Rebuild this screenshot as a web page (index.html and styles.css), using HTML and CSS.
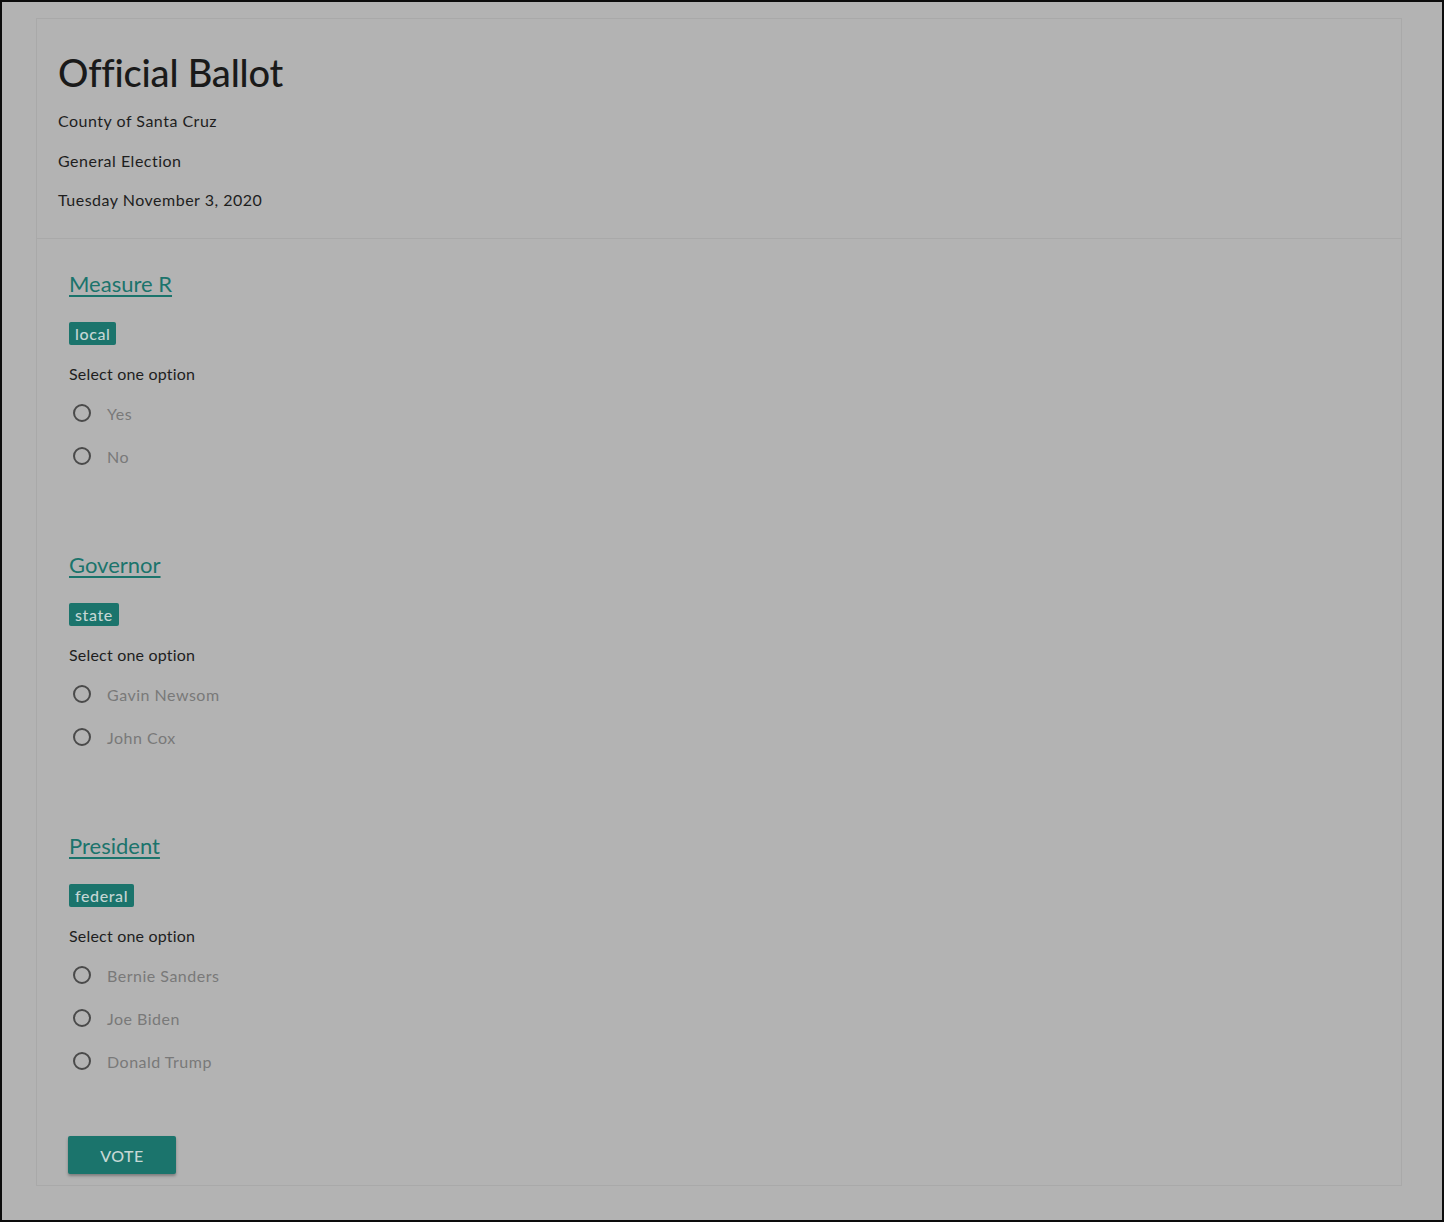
FILE: index.html
```html
<!DOCTYPE html>
<html>
<head>
<meta charset="utf-8">
<link rel="stylesheet" href="styles.css">
</head>
<body>
<div class="frame">
  <div class="card">
    <header class="head">
      <h1 class="title">Official Ballot</h1>
      <p class="meta">County of Santa Cruz</p>
      <p class="meta">General Election</p>
      <p class="meta">Tuesday November 3, 2020</p>
    </header>
    <main class="body">
      <section class="race">
        <a class="race-title">Measure R</a>
        <span class="tag">local</span>
        <p class="hint">Select one option</p>
        <label class="opt"><span class="radio"></span>Yes</label>
        <label class="opt"><span class="radio"></span>No</label>
      </section>
      <section class="race">
        <a class="race-title">Governor</a>
        <span class="tag">state</span>
        <p class="hint">Select one option</p>
        <label class="opt"><span class="radio"></span>Gavin Newsom</label>
        <label class="opt"><span class="radio"></span>John Cox</label>
      </section>
      <section class="race">
        <a class="race-title">President</a>
        <span class="tag">federal</span>
        <p class="hint">Select one option</p>
        <label class="opt"><span class="radio"></span>Bernie Sanders</label>
        <label class="opt"><span class="radio"></span>Joe Biden</label>
        <label class="opt"><span class="radio"></span>Donald Trump</label>
      </section>
      <button class="vote">VOTE</button>
    </main>
  </div>
</div>
</body>
</html>
```
FILE: styles.css
```css
html, body { margin: 0; padding: 0; }
body { font-family: "Lato", "Open Sans", sans-serif; color: #1c1c1c; }
.frame {
  box-sizing: border-box;
  width: 1444px;
  height: 1222px;
  border: 2px solid #0c0c0c;
  background: #b3b3b3;
  padding: 16px 40px 0 34px;
}
.card {
  border: 1px solid #a9a9a9;
  box-sizing: border-box;
  height: 1168px;
  display: flex;
  flex-direction: column;
}
.head {
  border-bottom: 1px solid #a9a9a9;
  padding: 29px 21px 0 21px;
  height: 220px;
  box-sizing: border-box;
}
.title { margin: 0 0 14px; font-size: 38px; font-weight: 500; line-height: 48px; color: #1a1a1a; letter-spacing: -0.2px; }
.meta { margin: 0 0 17.5px; font-size: 16px; line-height: 22px; color: #1e1e1e; letter-spacing: 0.5px; }
.body { padding: 30px 32px 0 32px; display: flex; flex-direction: column; align-items: flex-start; }
.race { display: flex; flex-direction: column; align-items: flex-start; height: 281px; }
.race:last-of-type { height: 304px; }
.race-title { font-size: 22px; line-height: 30px; color: #1b746c; text-decoration: underline; text-underline-offset: 3px; text-decoration-thickness: 2px; }
.tag { margin-top: 23px; background: #1b746c; color: #c4d6d4; font-size: 16px; line-height: 23px; padding: 0 6px; border-radius: 2px; letter-spacing: 0.6px; font-weight: 500; }
.hint { margin: 17px 0 0; font-size: 16px; line-height: 24px; color: #1e1e1e; letter-spacing: 0.2px; }
.opt { display: flex; align-items: center; margin-top: 15px; height: 24px; font-size: 16px; color: #797979; letter-spacing: 0.5px; }
.opt + .opt { margin-top: 19px; }
.radio { width: 14px; height: 14px; border: 2px solid #4a4a4a; border-radius: 50%; margin: 0 16px 0 4px; }
.vote {
  margin: 1px 0 0 -1px;
  width: 108px; height: 38px;
  background: #1b746c; color: #c6d8d5; border: 0; border-radius: 2px;
  font-family: inherit; font-size: 16px; font-weight: 500; letter-spacing: 0.5px;
  box-shadow: 0 2px 3px rgba(0,0,0,0.3);
}
```
